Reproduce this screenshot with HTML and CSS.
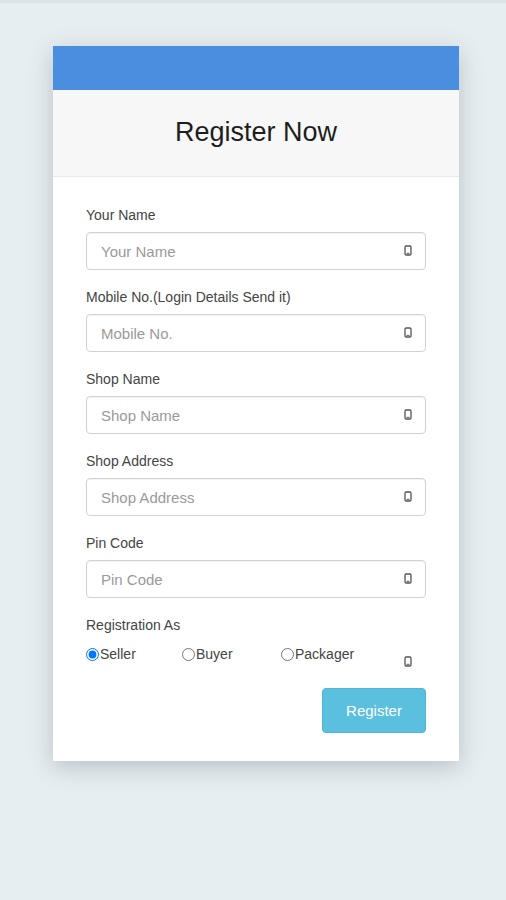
FILE: index.html
```html
<!DOCTYPE html>
<html lang="en">
<head>
<meta charset="utf-8">
<title>Register Now</title>
<link rel="stylesheet" href="styles.css">
</head>
<body>
<div class="topbar"></div>
<div class="card">
  <div class="card-top"></div>
  <div class="card-head"><h1>Register Now</h1></div>
  <form class="card-body">
    <div class="group">
      <label class="lbl">Your Name</label>
      <div class="field"><input type="text" placeholder="Your Name"><svg class="ico" viewBox="0 0 8 11"><rect x="1" y="1" width="6" height="9" rx="1.2" fill="none" stroke="#555" stroke-width="1.3"/><line x1="2.5" y1="8.3" x2="5.5" y2="8.3" stroke="#555" stroke-width="1"/></svg></div>
    </div>
    <div class="group">
      <label class="lbl">Mobile No.(Login Details Send it)</label>
      <div class="field"><input type="text" placeholder="Mobile No."><svg class="ico" viewBox="0 0 8 11"><rect x="1" y="1" width="6" height="9" rx="1.2" fill="none" stroke="#555" stroke-width="1.3"/><line x1="2.5" y1="8.3" x2="5.5" y2="8.3" stroke="#555" stroke-width="1"/></svg></div>
    </div>
    <div class="group">
      <label class="lbl">Shop Name</label>
      <div class="field"><input type="text" placeholder="Shop Name"><svg class="ico" viewBox="0 0 8 11"><rect x="1" y="1" width="6" height="9" rx="1.2" fill="none" stroke="#555" stroke-width="1.3"/><line x1="2.5" y1="8.3" x2="5.5" y2="8.3" stroke="#555" stroke-width="1"/></svg></div>
    </div>
    <div class="group">
      <label class="lbl">Shop Address</label>
      <div class="field"><input type="text" placeholder="Shop Address"><svg class="ico" viewBox="0 0 8 11"><rect x="1" y="1" width="6" height="9" rx="1.2" fill="none" stroke="#555" stroke-width="1.3"/><line x1="2.5" y1="8.3" x2="5.5" y2="8.3" stroke="#555" stroke-width="1"/></svg></div>
    </div>
    <div class="group">
      <label class="lbl">Pin Code</label>
      <div class="field"><input type="text" placeholder="Pin Code"><svg class="ico" viewBox="0 0 8 11"><rect x="1" y="1" width="6" height="9" rx="1.2" fill="none" stroke="#555" stroke-width="1.3"/><line x1="2.5" y1="8.3" x2="5.5" y2="8.3" stroke="#555" stroke-width="1"/></svg></div>
    </div>
    <div class="group">
      <label class="lbl">Registration As</label>
      <div class="radios">
        <label class="opt"><input type="radio" name="as" checked>Seller</label>
        <label class="opt opt2"><input type="radio" name="as">Buyer</label>
        <label class="opt"><input type="radio" name="as">Packager</label>
        <svg class="ico ico-r" viewBox="0 0 8 11"><rect x="1" y="1" width="6" height="9" rx="1.2" fill="none" stroke="#555" stroke-width="1.3"/><line x1="2.5" y1="8.3" x2="5.5" y2="8.3" stroke="#555" stroke-width="1"/></svg>
      </div>
    </div>
    <div class="actions"><button type="button" class="btn">Register</button></div>
  </form>
</div>
</body>
</html>
```
FILE: styles.css
```css
html, body {
  margin: 0;
  padding: 0;
}
body {
  background: #e7eef1;
  font-family: "Liberation Sans", Arial, sans-serif;
  min-height: 900px;
}
.topbar {
  height: 3px;
  background: #dde2e5;
}
.card {
  width: 406px;
  margin: 43px 0 0 53px;
  background: #fff;
  box-shadow: 0 6px 22px rgba(60, 80, 90, 0.28);
}
.card-top {
  height: 44px;
  background: #4a8ee0;
}
.card-head {
  height: 86px;
  background: #f7f7f8;
  border-bottom: 1px solid #e9e9eb;
  display: flex;
  align-items: center;
  justify-content: center;
}
.card-head h1 {
  margin: 0 0 2px;
  font-weight: normal;
  font-size: 27px;
  color: #1e1e1e;
}
.card-body {
  padding: 28px 33px 28px;
  display: flex;
  flex-direction: column;
}
.group {
  display: flex;
  flex-direction: column;
  margin-bottom: 17px;
}
.lbl {
  font-size: 14px;
  line-height: 20px;
  color: #444;
  margin-bottom: 7px;
}
.field {
  position: relative;
}
.field input {
  box-sizing: border-box;
  width: 100%;
  height: 38px;
  border: 1px solid #d0d3d6;
  border-radius: 4px;
  padding: 0 14px;
  font-family: inherit;
  font-size: 15px;
  color: #333;
  box-shadow: inset 0 1px 1px rgba(0, 0, 0, 0.05);
  outline: none;
}
.field input::placeholder {
  color: #9a9a9a;
}
.ico {
  width: 8px;
  height: 11px;
}
.field .ico {
  position: absolute;
  right: 14px;
  top: 13px;
}
.radios {
  display: flex;
  align-items: center;
  height: 20px;
  margin-top: 2px;
}
.opt {
  display: flex;
  align-items: center;
  font-size: 14px;
  color: #444;
  width: 96px;
}
.opt2 {
  width: 99px;
}
.opt input {
  margin: 0 1px 0 0;
  width: 13px;
  height: 13px;
}
.ico-r {
  margin-left: auto;
  margin-right: 14px;
  align-self: flex-end;
  margin-bottom: -3px;
}
.actions {
  display: flex;
  justify-content: flex-end;
  margin-top: 7px;
}
.btn {
  width: 104px;
  height: 45px;
  background: #5bc0de;
  border: 1px solid #4fb6d6;
  border-radius: 4px;
  color: #fff;
  font-family: inherit;
  font-size: 15px;
}
```
